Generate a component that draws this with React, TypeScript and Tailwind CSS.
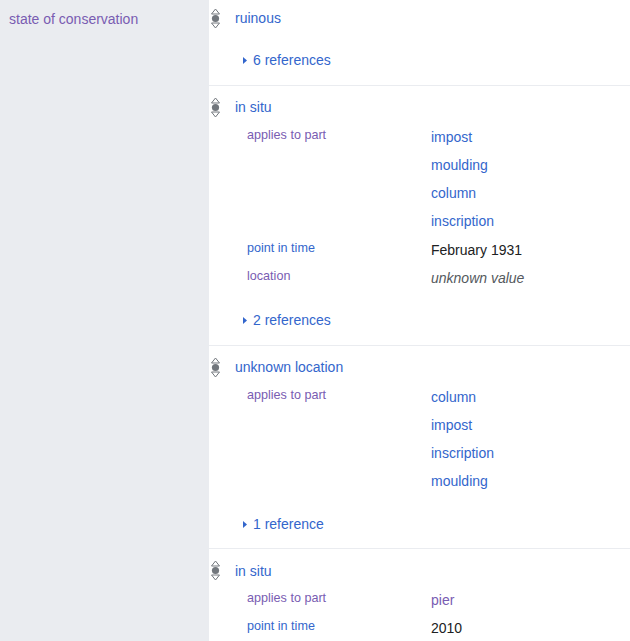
import React from 'react';

type Val = { text: string; kind?: 'link' | 'visited' | 'plain' | 'unknown' };
type Qual = { label: string; visited?: boolean; values: Val[] };
type Stmt = { value: string; qualifiers?: Qual[]; refs?: string; first?: boolean };

const statements: Stmt[] = [
  { value: 'ruinous', refs: '6 references', first: true },
  {
    value: 'in situ',
    qualifiers: [
      {
        label: 'applies to part',
        visited: true,
        values: [{ text: 'impost' }, { text: 'moulding' }, { text: 'column' }, { text: 'inscription' }],
      },
      { label: 'point in time', values: [{ text: 'February 1931', kind: 'plain' }] },
      { label: 'location', visited: true, values: [{ text: 'unknown value', kind: 'unknown' }] },
    ],
    refs: '2 references',
  },
  {
    value: 'unknown location',
    qualifiers: [
      {
        label: 'applies to part',
        visited: true,
        values: [{ text: 'column' }, { text: 'impost' }, { text: 'inscription' }, { text: 'moulding' }],
      },
    ],
    refs: '1 reference',
  },
  {
    value: 'in situ',
    qualifiers: [
      { label: 'applies to part', visited: true, values: [{ text: 'pier', kind: 'visited' }] },
      { label: 'point in time', values: [{ text: '2010', kind: 'plain' }] },
    ],
  },
];

const valueClass = (kind?: Val['kind']) => {
  if (kind === 'plain') return 'text-[#202122]';
  if (kind === 'unknown') return 'text-[#54595d] italic';
  if (kind === 'visited') return 'text-[#795cb2]';
  return 'text-[#3366cc]';
};

const RankIcon = () => (
  <svg width="11" height="21" viewBox="0 0 11 21" className="block">
    <path d="M5.5 1 L9.5 6 L1.5 6 Z" fill="none" stroke="#72777d" strokeWidth="1" />
    <circle cx="5.5" cy="10.5" r="3.6" fill="#72777d" />
    <path d="M1.5 15 L9.5 15 L5.5 20 Z" fill="none" stroke="#72777d" strokeWidth="1" />
  </svg>
);

const Statement: React.FC<{ s: Stmt }> = ({ s }) => {
  const hasQuals = !!s.qualifiers?.length;
  return (
    <div className={`border-b border-[#eaecf0] pb-[9.9px] ${s.first ? 'pt-[4.9px]' : 'pt-[7.9px]'}`}>
      <div className="relative flex h-[28.2px] items-center">
        <div className="absolute left-[1px] top-[3px]">
          <RankIcon />
        </div>
        <span className="pl-[26px] text-[14px] text-[#3366cc]">{s.value}</span>
      </div>
      {hasQuals && (
        <div className="mt-[0.8px]">
          {s.qualifiers!.map((q, i) => (
            <div key={i} className="flex items-start">
              <div
                className={`w-[222px] shrink-0 pl-[38px] text-[12.6px] leading-[25.6px] ${
                  q.visited ? 'text-[#795cb2]' : 'text-[#3366cc]'
                }`}
              >
                {q.label}
              </div>
              <div className="flex flex-col">
                {q.values.map((v, j) => (
                  <div key={j} className={`h-[28.2px] text-[14px] leading-[28.2px] ${valueClass(v.kind)}`}>
                    {v.text}
                  </div>
                ))}
              </div>
            </div>
          ))}
        </div>
      )}
      {s.refs && (
        <div className={`flex h-[28.2px] items-center pl-[34px] ${hasQuals ? 'mt-[14.8px]' : 'mt-[13.8px]'}`}>
          <svg width="4" height="7" viewBox="0 0 4 7" className="mr-[6px]">
            <path d="M0 0 L4 3.5 L0 7 Z" fill="#3366cc" />
          </svg>
          <span className="text-[14px] text-[#3366cc]">{s.refs}</span>
        </div>
      )}
    </div>
  );
};

export default function App() {
  return (
    <div
      className="flex h-[641px] w-[630px] overflow-hidden bg-white"
      style={{ fontFamily: '"Liberation Sans", Arial, sans-serif' }}
    >
      <div className="w-[209px] shrink-0 bg-[#eaecf0]">
        <div className="flex h-[38px] items-center pl-[9px] text-[14px] text-[#795cb2]">state of conservation</div>
      </div>
      <div className="flex-1">
        {statements.map((s, i) => (
          <Statement key={i} s={s} />
        ))}
      </div>
    </div>
  );
}
